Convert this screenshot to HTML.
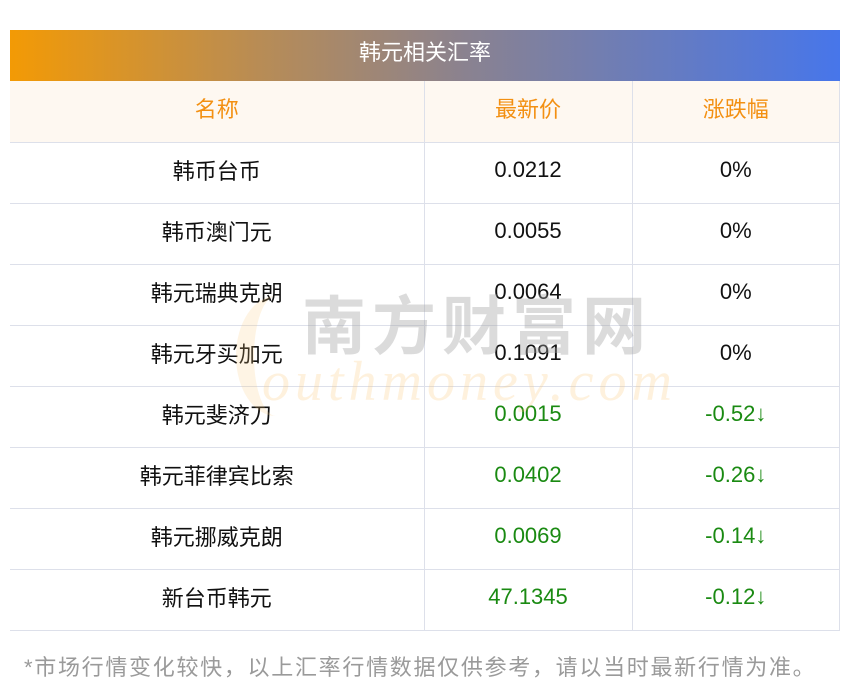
<!DOCTYPE html>
<html><head><meta charset="utf-8"><style>
*{margin:0;padding:0;box-sizing:border-box}
body{width:850px;height:697px;background:#fff;font-family:"Liberation Sans","Noto Sans CJK SC",sans-serif;position:relative;overflow:hidden}
.title{position:absolute;left:10px;top:30px;width:830px;height:51px;background:linear-gradient(90deg,#f39a05,#b88c55 30%,#8a8290 55%,#4776ea);color:#fff;font-size:22px;text-align:center;line-height:46px}
table{position:absolute;left:10px;top:81px;width:830px;border-collapse:collapse}
td,th{border:1px solid #dde0ea;text-align:center;height:61px;font-size:22px;font-weight:normal;color:#111;line-height:22px;padding:0}
td span,th span{position:relative;top:-3px}
td.n span,th span{top:-1px}
tr:first-child td,tr:first-child th{border-top:none}
td:first-child,th:first-child{border-left:none}
th{background:#fef8f1;color:#f39012}
.g{color:#1a8a12}
.foot{position:absolute;left:24px;top:650px;font-size:22px;letter-spacing:1.7px;color:#9a9a9a;white-space:nowrap}
.wm1{position:absolute;left:302px;top:292px;font-size:64px;line-height:70px;color:rgba(160,160,160,.38);letter-spacing:6px;font-weight:bold;white-space:nowrap}
.wm2{position:absolute;left:262px;top:352px;font-size:56px;line-height:60px;font-style:italic;color:rgba(250,200,120,.25);font-family:"Liberation Serif",serif;letter-spacing:5px;white-space:nowrap}
.wmS{position:absolute;left:236px;top:296px;width:80px;height:120px;border-radius:50%;border-left:18px solid rgba(250,200,120,.2)}
</style></head><body>
<div class="title">韩元相关汇率</div>
<table>
<tr><th style="width:414px"><span>名称</span></th><th style="width:208px"><span>最新价</span></th><th><span>涨跌幅</span></th></tr>
<tr><td class="n"><span>韩币台币</span></td><td><span>0.0212</span></td><td><span>0%</span></td></tr>
<tr><td class="n"><span>韩币澳门元</span></td><td><span>0.0055</span></td><td><span>0%</span></td></tr>
<tr><td class="n"><span>韩元瑞典克朗</span></td><td><span>0.0064</span></td><td><span>0%</span></td></tr>
<tr><td class="n"><span>韩元牙买加元</span></td><td><span>0.1091</span></td><td><span>0%</span></td></tr>
<tr><td class="n"><span>韩元斐济刀</span></td><td class="g"><span>0.0015</span></td><td class="g"><span>-0.52↓</span></td></tr>
<tr><td class="n"><span>韩元菲律宾比索</span></td><td class="g"><span>0.0402</span></td><td class="g"><span>-0.26↓</span></td></tr>
<tr><td class="n"><span>韩元挪威克朗</span></td><td class="g"><span>0.0069</span></td><td class="g"><span>-0.14↓</span></td></tr>
<tr><td class="n"><span>新台币韩元</span></td><td class="g"><span>47.1345</span></td><td class="g"><span>-0.12↓</span></td></tr>
</table>
<div class="wmS"></div>
<div class="wm1">南方财富网</div>
<div class="wm2">outhmoney.com</div>
<div class="foot">*市场行情变化较快，以上汇率行情数据仅供参考，请以当时最新行情为准。</div>
</body></html>
